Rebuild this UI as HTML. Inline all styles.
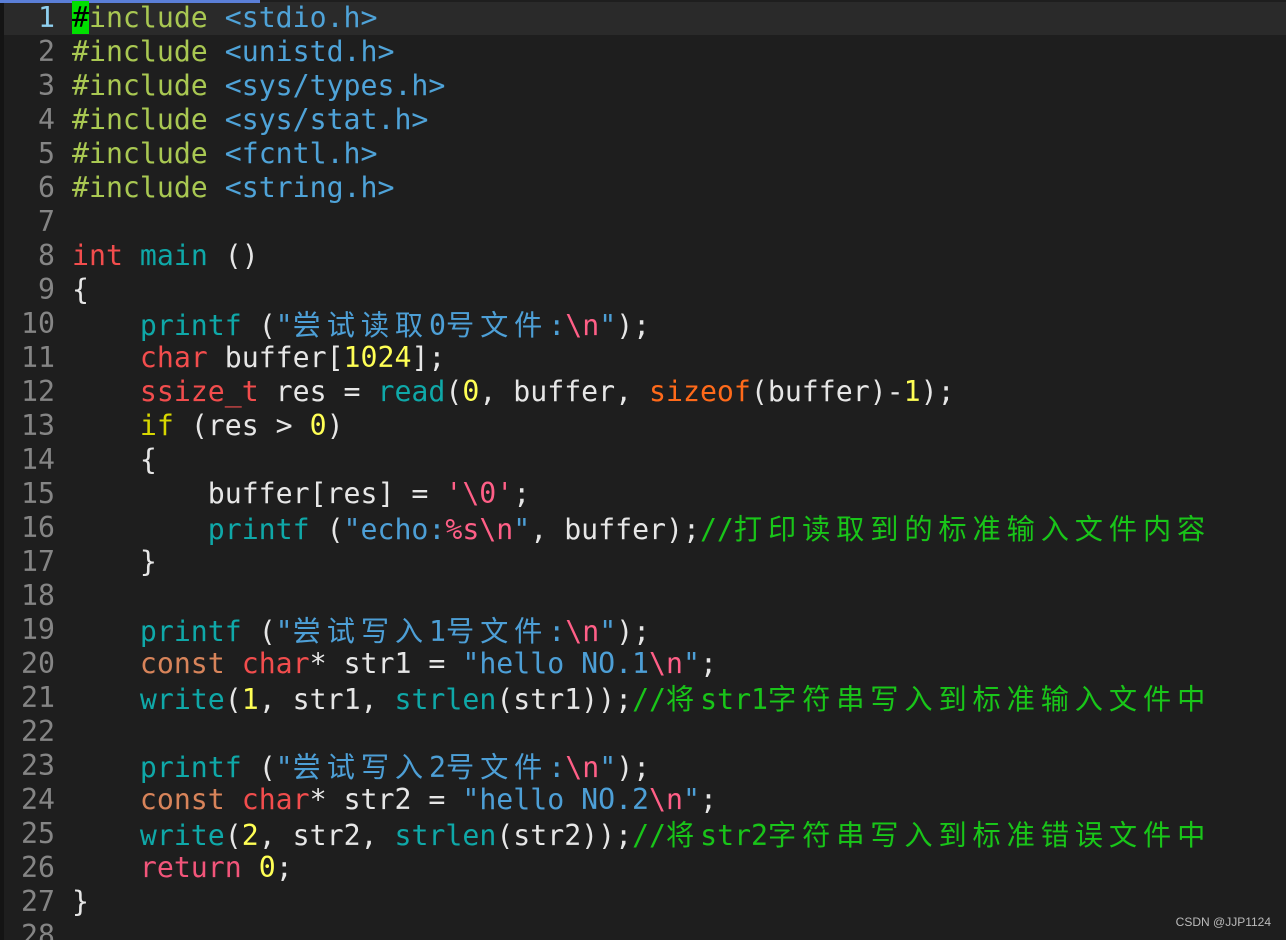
<!DOCTYPE html>
<html><head><meta charset="utf-8"><style>
html,body{margin:0;padding:0;background:#1e1e1e;width:1286px;height:940px;overflow:hidden}
body{position:relative;font-family:"DejaVu Sans Mono","Liberation Mono","Noto Sans CJK SC",monospace;font-size:28.2px;color:#e6e6e6}
.strip{position:absolute;left:0;top:0;width:4px;height:940px;background:#141414}
.top{position:absolute;left:0;top:0;width:260px;height:3px;background:#5b7fd8}
.hl{position:absolute;left:4px;top:2px;width:1282px;height:33px;background:#2a2a2a}
.l{position:absolute;left:0;height:34px;line-height:34px;white-space:pre;width:1286px}
.n{position:absolute;right:1231px;top:0;color:#858585}
.t{position:absolute;left:72px;top:0}
.c{font-family:"Noto Sans CJK SC",sans-serif;letter-spacing:5.9px}
.inc{color:#a9c852}.hd{color:#4fa3d8}.ty{color:#f24d4d}.fn{color:#0fa8a8}.num{color:#ffff55}
.so{color:#ff6a1a}.esc{color:#ff5f87}.s{color:#4d9fd6}.cm{color:#19c519}.rt{color:#f2557a}
.if{color:#d7d700}.cs{color:#d8845a}
.wm{position:absolute;right:15px;top:915px;font-family:"Liberation Sans",sans-serif;font-size:12px;color:#bbb}
</style></head><body>
<div class="strip"></div><div class="hl"></div><div class="top"></div>
<div class="l" style="top:1px"><span class="n" style="color:#8fd0f0">1</span><span class="t"><span style="background:#00e000;color:#000">#</span><span class="inc">include</span> <span class="hd">&lt;stdio.h&gt;</span></span></div>
<div class="l" style="top:35px"><span class="n">2</span><span class="t"><span class="inc">#include</span> <span class="hd">&lt;unistd.h&gt;</span></span></div>
<div class="l" style="top:69px"><span class="n">3</span><span class="t"><span class="inc">#include</span> <span class="hd">&lt;sys/types.h&gt;</span></span></div>
<div class="l" style="top:103px"><span class="n">4</span><span class="t"><span class="inc">#include</span> <span class="hd">&lt;sys/stat.h&gt;</span></span></div>
<div class="l" style="top:137px"><span class="n">5</span><span class="t"><span class="inc">#include</span> <span class="hd">&lt;fcntl.h&gt;</span></span></div>
<div class="l" style="top:171px"><span class="n">6</span><span class="t"><span class="inc">#include</span> <span class="hd">&lt;string.h&gt;</span></span></div>
<div class="l" style="top:205px"><span class="n">7</span></div>
<div class="l" style="top:239px"><span class="n">8</span><span class="t"><span class="ty">int</span> <span class="fn">main</span> ()</span></div>
<div class="l" style="top:273px"><span class="n">9</span><span class="t">{</span></div>
<div class="l" style="top:307px"><span class="n">10</span><span class="t">    <span class="fn">printf</span> (<span class="s">"<span class="c">尝试读取</span>0<span class="c">号文件</span>:</span><span class="esc">\n</span><span class="s">"</span>);</span></div>
<div class="l" style="top:341px"><span class="n">11</span><span class="t">    <span class="ty">char</span> buffer[<span class="num">1024</span>];</span></div>
<div class="l" style="top:375px"><span class="n">12</span><span class="t">    <span class="ty">ssize_t</span> res = <span class="fn">read</span>(<span class="num">0</span>, buffer, <span class="so">sizeof</span>(buffer)-<span class="num">1</span>);</span></div>
<div class="l" style="top:409px"><span class="n">13</span><span class="t">    <span class="if">if</span> (res &gt; <span class="num">0</span>)</span></div>
<div class="l" style="top:443px"><span class="n">14</span><span class="t">    {</span></div>
<div class="l" style="top:477px"><span class="n">15</span><span class="t">        buffer[res] = <span class="esc">'\0'</span>;</span></div>
<div class="l" style="top:511px"><span class="n">16</span><span class="t">        <span class="fn">printf</span> (<span class="s">"echo:</span><span class="esc">%s\n</span><span class="s">"</span>, buffer);<span class="cm">//<span class="c">打印读取到的标准输入文件内容</span></span></span></div>
<div class="l" style="top:545px"><span class="n">17</span><span class="t">    }</span></div>
<div class="l" style="top:579px"><span class="n">18</span></div>
<div class="l" style="top:613px"><span class="n">19</span><span class="t">    <span class="fn">printf</span> (<span class="s">"<span class="c">尝试写入</span>1<span class="c">号文件</span>:</span><span class="esc">\n</span><span class="s">"</span>);</span></div>
<div class="l" style="top:647px"><span class="n">20</span><span class="t">    <span class="cs">const</span> <span class="ty">char</span>* str1 = <span class="s">"hello NO.1</span><span class="esc">\n</span><span class="s">"</span>;</span></div>
<div class="l" style="top:681px"><span class="n">21</span><span class="t">    <span class="fn">write</span>(<span class="num">1</span>, str1, <span class="fn">strlen</span>(str1));<span class="cm">//<span class="c">将</span>str1<span class="c">字符串写入到标准输入文件中</span></span></span></div>
<div class="l" style="top:715px"><span class="n">22</span></div>
<div class="l" style="top:749px"><span class="n">23</span><span class="t">    <span class="fn">printf</span> (<span class="s">"<span class="c">尝试写入</span>2<span class="c">号文件</span>:</span><span class="esc">\n</span><span class="s">"</span>);</span></div>
<div class="l" style="top:783px"><span class="n">24</span><span class="t">    <span class="cs">const</span> <span class="ty">char</span>* str2 = <span class="s">"hello NO.2</span><span class="esc">\n</span><span class="s">"</span>;</span></div>
<div class="l" style="top:817px"><span class="n">25</span><span class="t">    <span class="fn">write</span>(<span class="num">2</span>, str2, <span class="fn">strlen</span>(str2));<span class="cm">//<span class="c">将</span>str2<span class="c">字符串写入到标准错误文件中</span></span></span></div>
<div class="l" style="top:851px"><span class="n">26</span><span class="t">    <span class="rt">return</span> <span class="num">0</span>;</span></div>
<div class="l" style="top:885px"><span class="n">27</span><span class="t">}</span></div>
<div class="l" style="top:919px"><span class="n">28</span></div>
<div class="wm">CSDN @JJP1124</div>
</body></html>
